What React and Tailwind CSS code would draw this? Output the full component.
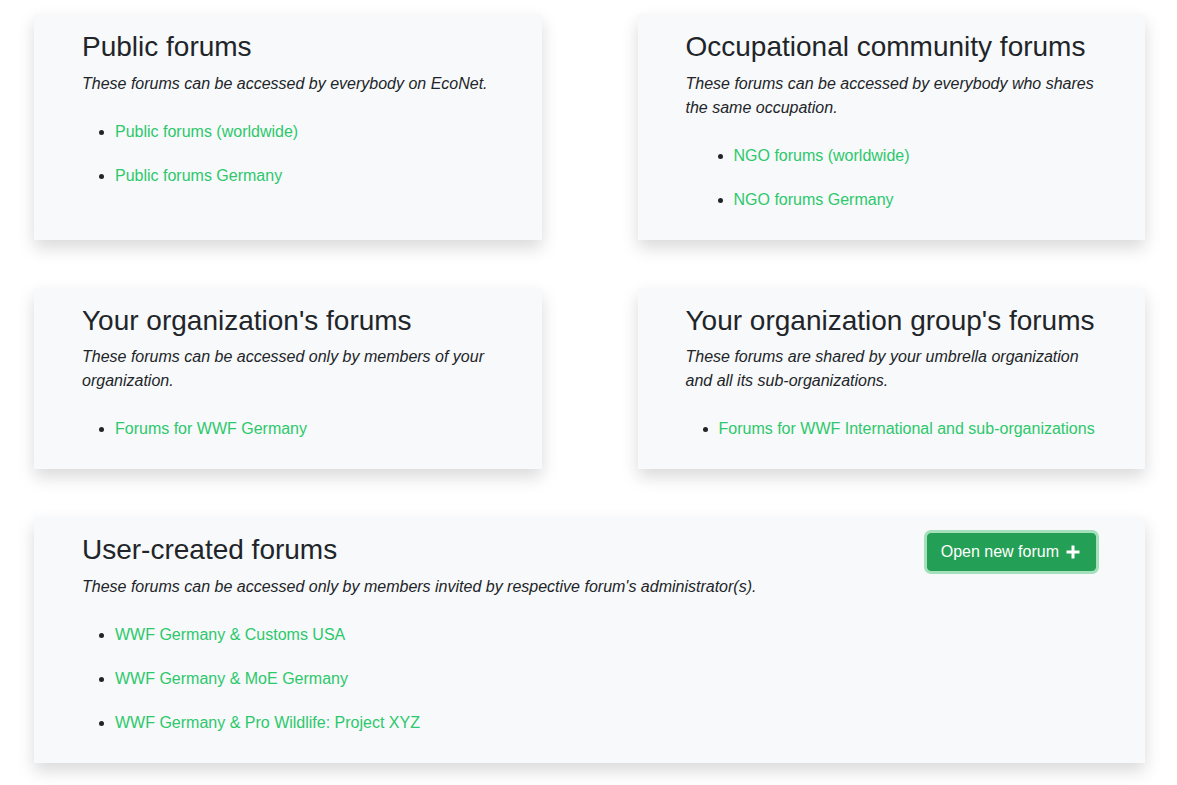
import React from "react";

const forumCards = [
  {
    title: "Public forums",
    text: "These forums can be accessed by everybody on EcoNet.",
    links: ["Public forums (worldwide)", "Public forums Germany"],
  },
  {
    title: "Occupational community forums",
    text: "These forums can be accessed by everybody who shares the same occupation.",
    links: ["NGO forums (worldwide)", "NGO forums Germany"],
    indent: "pl-[48px]",
  },
  {
    title: "Your organization's forums",
    text: "These forums can be accessed only by members of your organization.",
    links: ["Forums for WWF Germany"],
  },
  {
    title: "Your organization group's forums",
    text: "These forums are shared by your umbrella organization and all its sub-organizations.",
    links: ["Forums for WWF International and sub-organizations"],
  },
];

const userForums = [
  "WWF Germany & Customs USA",
  "WWF Germany & MoE Germany",
  "WWF Germany & Pro Wildlife: Project XYZ",
];

const LinkList = ({ links, indent = "pl-[33px]" }) => (
  <ul className={`list-disc m-0 marker:text-[#212529] ${indent}`}>
    {links.map((l) => (
      <li key={l} className="py-[10px] leading-6">
        <a href="#" className="text-[#2cc86c] no-underline">
          {l}
        </a>
      </li>
    ))}
  </ul>
);

const Card = ({ title, text, links, indent, action, className = "" }) => (
  <section
    className={`bg-[#f8f9fa] shadow-[0_8px_16px_rgba(0,0,0,0.15)] px-12 pt-4 pb-[18px] ${className}`}
  >
    <div className="flex items-start justify-between">
      <h3 className="text-[28px] leading-[1.2] font-normal text-[#212529] mb-2">{title}</h3>
      {action}
    </div>
    <p className="italic text-base leading-6 text-[#212529] mb-[14px]">{text}</p>
    <LinkList links={links} indent={indent} />
  </section>
);

export default function App() {
  return (
    <div
      className="bg-white min-h-screen pl-[34px] pr-[32px] pt-[14px] pb-[22px] text-[#212529]"
      style={{ fontFamily: '"Liberation Sans", Arial, sans-serif' }}
    >
      <div className="grid grid-cols-2 gap-x-[96px] gap-y-[48px]">
        {forumCards.map((c) => (
          <Card key={c.title} {...c} />
        ))}
        <Card
          className="col-span-2"
          title="User-created forums"
          text="These forums can be accessed only by members invited by respective forum's administrator(s)."
          links={userForums}
          action={
            <button className="flex items-center gap-[7px] bg-[#23a055] text-white text-base leading-6 pl-[13px] pr-[15px] py-[6px] border border-[#23a055] rounded-[4px] ring-[3px] ring-[#a3e0bb] mr-[1px]">
              Open new forum
              <svg width="14" height="14" viewBox="0 0 14 14" aria-hidden="true">
                <path d="M7 0.5v13M0.5 7h13" stroke="white" strokeWidth="3" strokeLinecap="butt" />
              </svg>
            </button>
          }
        />
      </div>
    </div>
  );
}
